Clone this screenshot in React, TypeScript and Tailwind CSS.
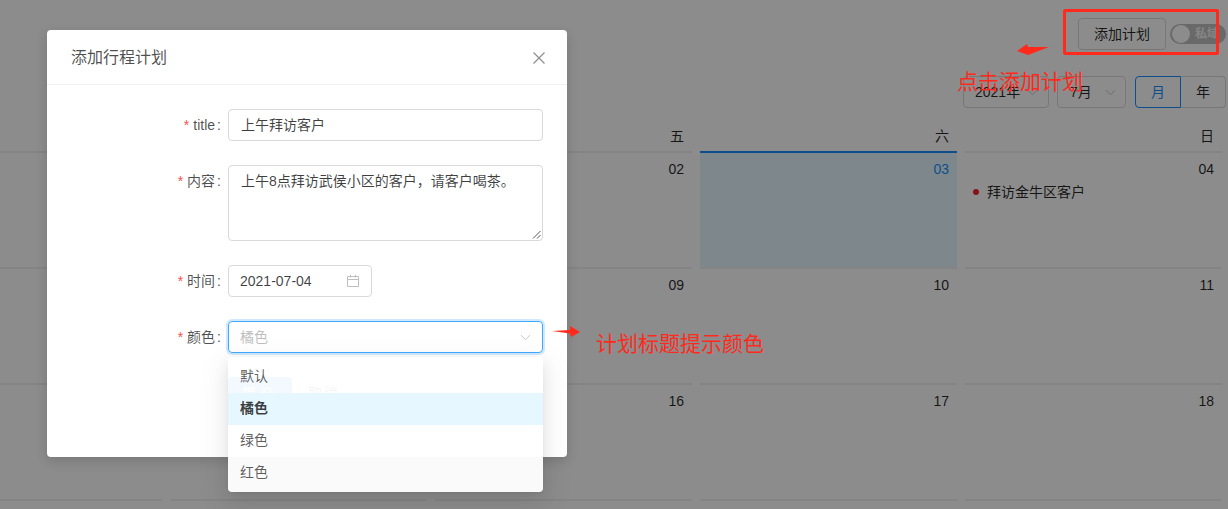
import React from "react";

const FONT = '"Liberation Sans","Noto Sans CJK SC",sans-serif';

function Chevron({ className }: { className?: string }) {
  return (
    <svg viewBox="0 0 12 8" width="11" height="7" fill="none" stroke="currentColor" strokeWidth="1" className={className}>
      <path d="M0.8 1.2 L6 6.6 L11.2 1.2" />
    </svg>
  );
}

const rows: { n: string; sel?: boolean; event?: string }[][] = [
  [{ n: "30" }, { n: "01" }, { n: "02" }, { n: "03", sel: true }, { n: "04", event: "拜访金牛区客户" }],
  [{ n: "07" }, { n: "08" }, { n: "09" }, { n: "10" }, { n: "11" }],
  [{ n: "14" }, { n: "15" }, { n: "16" }, { n: "17" }, { n: "18" }],
];

function Label({ text }: { text: string }) {
  return (
    <label className="w-[181px] h-8 shrink-0 flex items-center justify-end text-sm text-[#000000b3]">
      <span className="text-[#ff4d4f] mr-1">*</span>
      {text}
      <span className="ml-[2px] mr-[7px]">:</span>
    </label>
  );
}

export default function App() {
  return (
    <div className="relative w-[1228px] h-[509px] overflow-hidden bg-white text-sm text-[#000000d9]" style={{ fontFamily: FONT }}>
      {/* page */}
      <div className="pt-[18px]">
        <div className="flex justify-end items-center h-8 pr-[2px] gap-1">
          <button className="w-[88px] h-8 border border-[#d9d9d9] rounded-sm bg-white">添加计划</button>
          <div className="w-[56px] h-[20px] rounded-full bg-[#bfbfbf] flex items-center pl-[2px] pr-[7px] justify-between text-xs font-bold text-white/80">
            <span className="w-[18px] h-[18px] rounded-full bg-white" />
            <span>私域</span>
          </div>
        </div>
        <div className="flex justify-end mt-[26px] pr-[2px]">
          <div className="w-[86px] h-8 border border-[#d9d9d9] rounded-sm flex items-center justify-between pl-[11px] pr-[10px]">
            <span>2021年</span>
            <Chevron className="text-[#bfbfbf]" />
          </div>
          <div className="w-[69px] h-8 ml-2 border border-[#d9d9d9] rounded-sm flex items-center justify-between pl-3 pr-[9px]">
            <span>7月</span>
            <Chevron className="text-[#bfbfbf]" />
          </div>
          <div className="flex ml-[9px]">
            <div className="w-[46px] h-8 border border-[#1890ff] text-[#1890ff] rounded-l-sm flex items-center justify-center">月</div>
            <div className="w-[45px] h-8 border border-l-0 border-[#d9d9d9] rounded-r-sm flex items-center justify-center">年</div>
          </div>
        </div>

        <div className="ml-[-95px] grid grid-cols-[repeat(5,257px)] gap-x-2 mt-[17px]">
          {["三", "四", "五", "六", "日"].map((d) => (
            <div key={d} className="h-[26px] leading-[22px] text-right pr-2">{d}</div>
          ))}
          {rows.flat().map((c) => (
            <div
              key={c.n}
              className={
                c.sel
                  ? "h-[116px] border-t-2 border-[#1890ff] bg-[#e6f7ff] text-[#1890ff] px-2 pt-[5px]"
                  : "h-[116px] border-t-2 border-[#f0f0f0] px-2 pt-[5px]"
              }
            >
              <div className="text-right leading-[22px]">{c.n}</div>
              {c.event && (
                <div className="flex items-center mt-[1px] leading-[22px]">
                  <span className="w-[6px] h-[6px] rounded-full bg-[#f5222d] mr-2" />
                  {c.event}
                </div>
              )}
            </div>
          ))}
          {["a", "b", "c", "d", "e"].map((k) => (
            <div key={k} className="h-[9px] border-t-2 border-[#f0f0f0]" />
          ))}
        </div>
      </div>

      {/* mask */}
      <div className="absolute inset-0 bg-black/45" />

      {/* modal */}
      <div className="absolute left-[47px] top-[30px] w-[520px] bg-white rounded-sm shadow-[0_4px_12px_rgba(0,0,0,0.15)]">
        <div className="h-[55px] border-b border-[#f0f0f0] flex items-center justify-between pl-6 pr-[21px] pt-[2px]">
          <span className="text-base text-[#000000b3]">添加行程计划</span>
          <svg viewBox="0 0 14 14" width="14" height="14" fill="none" stroke="#00000073" strokeWidth="1.2">
            <path d="M1.5 1.5 L12.5 12.5 M12.5 1.5 L1.5 12.5" />
          </svg>
        </div>
        <div className="pt-6 pb-12 flex flex-col gap-6 text-[#000000bf]">
          <div className="flex">
            <Label text="title" />
            <div className="w-[315px] h-8 border border-[#d9d9d9] rounded-sm flex items-center px-3">上午拜访客户</div>
          </div>
          <div className="flex">
            <Label text="内容" />
            <div className="relative w-[315px] h-[76px] border border-[#d9d9d9] rounded-sm px-3 py-1 leading-[22px]">
              上午8点拜访武侯小区的客户，请客户喝茶。
              <svg viewBox="0 0 9 9" width="9" height="9" fill="none" stroke="#555" strokeWidth="1" className="absolute right-[1px] bottom-[1px]">
                <path d="M1 8.5 L8.5 1 M5 8.5 L8.5 5" />
              </svg>
            </div>
          </div>
          <div className="flex">
            <Label text="时间" />
            <div className="w-[144px] h-8 border border-[#d9d9d9] rounded-sm flex items-center justify-between pl-[11px] pr-[11px]">
              <span>2021-07-04</span>
              <svg viewBox="0 0 14 14" width="14" height="14" fill="none" stroke="#bfbfbf" strokeWidth="1">
                <path d="M1.5 2.5 H12.5 V12.5 H1.5 Z M1.5 5.5 H12.5 M4.5 0.8 V3.5 M9.5 0.8 V3.5" />
              </svg>
            </div>
          </div>
          <div className="flex">
            <Label text="颜色" />
            <div className="w-[315px] h-8 border border-[#40a9ff] rounded-sm shadow-[0_0_0_2px_rgba(24,144,255,0.2)] flex items-center justify-between pl-[11px] pr-[11px]">
              <span className="text-[#bfbfbf]">橘色</span>
              <Chevron className="text-[#bfbfbf]" />
            </div>
          </div>
          <div className="flex pl-[181px] gap-4">
            <button className="w-16 h-8 bg-[#1890ff] text-white rounded-sm tracking-[4px]">提交</button>
            <button className="w-8 h-8 text-[#000000d9] tracking-[2px] whitespace-nowrap">取消</button>
          </div>
        </div>
      </div>

      {/* dropdown */}
      <div className="absolute left-[228px] top-[357px] w-[315px] pt-1 pb-[3px] rounded-sm bg-white/95 text-[#000000a6] shadow-[0_3px_6px_-4px_rgba(0,0,0,0.12),0_6px_16px_0_rgba(0,0,0,0.08),0_9px_28px_8px_rgba(0,0,0,0.05)]">
        <div className="h-8 px-3 pb-[2px] flex items-center">默认</div>
        <div className="h-8 px-3 pb-[2px] flex items-center font-semibold text-[#000000bf] bg-[#e6f7ff]/95">橘色</div>
        <div className="h-8 px-3 pb-[2px] flex items-center">绿色</div>
        <div className="h-8 px-3 pb-[2px] flex items-center bg-[#fafafa]">红色</div>
      </div>

      {/* annotations */}
      <div className="absolute left-[1063px] top-[9px] w-[156px] h-[46px] border-[3px] border-[#ff2a1c] rounded-[2px]" />
      <svg className="absolute left-[1016px] top-[42px]" width="34" height="16" viewBox="0 0 34 16">
        <polygon points="1,9 11,2 12,5 33,5 12,13" fill="#ff2a1c" />
      </svg>
      <span className="absolute left-[957px] top-[68px] text-[21px] leading-[28px] text-[#ff2a1c] whitespace-nowrap">点击添加计划</span>
      <svg className="absolute left-[550px] top-[324px]" width="32" height="14" viewBox="0 0 32 14">
        <polygon points="30,8 20,2 20,6 2,7 20,9.5 21,13" fill="#ff2a1c" />
      </svg>
      <span className="absolute left-[596px] top-[330px] text-[21px] leading-[28px] text-[#ff2a1c] whitespace-nowrap">计划标题提示颜色</span>
    </div>
  );
}
